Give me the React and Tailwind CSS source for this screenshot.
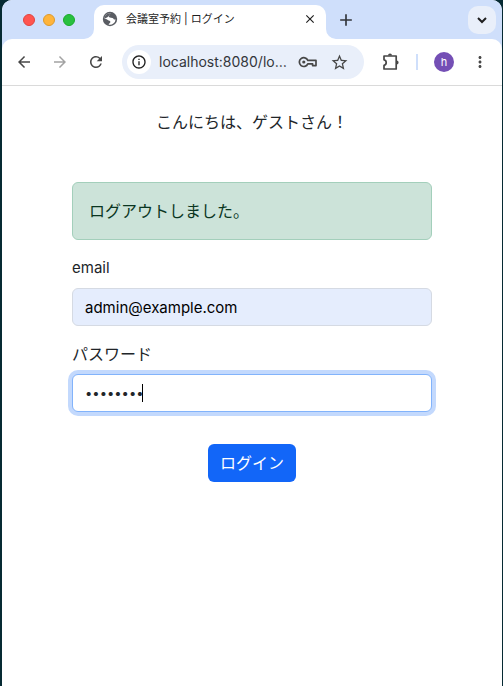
import {
  MdArrowBack,
  MdArrowForward,
  MdRefresh,
  MdOutlineInfo,
  MdStarBorder,
  MdMoreVert,
  MdClose,
  MdAdd,
} from "react-icons/md";

function TrafficLights() {
  return (
    <div className="flex gap-2 pl-[21px]">
      <button aria-label="Close window" className="size-3 rounded-full border border-[#e0443e] bg-[#ff5550]" />
      <button aria-label="Minimise window" className="size-3 rounded-full border border-[#dd9a2b] bg-[#ffb43b]" />
      <button aria-label="Zoom window" className="size-3 rounded-full border border-[#1aab29] bg-[#28c03f]" />
    </div>
  );
}

function TabCorner({ className }) {
  return (
    <svg viewBox="0 0 10 10" className={className} aria-hidden="true">
      <path d="M10 0V10H0A10 10 0 0 0 10 0Z" fill="#fff" />
    </svg>
  );
}

function GlobeIcon() {
  return (
    <svg viewBox="0 0 16 16" className="mt-[-6px] size-4" aria-hidden="true">
      <circle cx="8" cy="8" r="7.2" fill="#5a5d63" />
      <path
        d="M8.6 2.3C7.6 3.2 8.2 4 7.2 4.6C6.2 5.2 6.6 6.2 7.8 6.6C9.6 7 11.2 6.8 11.6 8C12 8.8 13 8.6 13.6 8.2A5.7 5.7 0 0 1 6.6 13.5C7 12.4 8.2 12.2 8.4 11C8.4 9.8 6.8 9.8 5.8 9C4.8 8 3.6 7.8 2.4 7.4A5.7 5.7 0 0 1 8.6 2.3Z"
        fill="#fff"
      />
      <path d="M2.4 7.4A5.7 5.7 0 0 1 8.6 2.3C7.6 3.2 8.2 4 7.2 4.6C6.2 5.2 6.4 5.8 5.4 6.2C4.4 6.6 3.6 7.2 2.4 7.4Z" fill="#5a5d63" />
    </svg>
  );
}

function TabStrip() {
  return (
    <div className="flex h-[39px] items-center rounded-t-[10px] bg-[#cfdffb] text-[#1f1f1f]">
      <TrafficLights />
      <div className="flex h-full items-end pl-[9px]">
        <TabCorner className="size-[10px]" />
        <div className="flex h-[34px] w-[232px] items-center rounded-t-[10px] bg-white px-2">
          <GlobeIcon />
          <span className="mt-[-6px] flex-1 truncate pl-2 text-[11px] leading-4">会議室予約 | ログイン</span>
          <button aria-label="Close tab" className="mt-[-6px]">
            <MdClose className="size-4 p-px" />
          </button>
        </div>
        <TabCorner className="size-[10px] -scale-x-100" />
      </div>
      <button aria-label="New tab">
        <MdAdd className="size-5 text-[#33363b]" />
      </button>
      <button
        aria-label="Search tabs"
        className="mr-[6px] ml-auto flex size-7 items-center justify-center rounded-[10px] bg-[#e9effa]"
      >
        <svg viewBox="0 0 16 16" className="size-4" fill="none" stroke="#1f1f1f" strokeWidth="2" aria-hidden="true">
          <path d="M4 6L8 10L12 6" />
        </svg>
      </button>
    </div>
  );
}

function PuzzleIcon() {
  return (
    <svg viewBox="0 0 18 18" className="size-[18px]" fill="none" stroke="#474747" strokeWidth="1.7" strokeLinejoin="round" aria-hidden="true">
      <path d="M2 3H14.2V16H2V12.4C3.4 12.2 4.2 11 4.2 9.6C4.2 8.2 3.4 7 2 6.8Z" />
      <path d="M6 2.6a2 2 0 0 1 4 0Z M14.6 7.4a2 2 0 0 1 0 4Z" fill="#474747" stroke="none" />
    </svg>
  );
}

function KeyIcon() {
  return (
    <svg viewBox="0 0 20 14" className="h-[14px] w-5" fill="none" stroke="#474747" strokeWidth="1.7" strokeLinejoin="round" aria-hidden="true">
      <path d="M9.8 5.4H18V10.6H14.6V8.8H9.8A4.4 4.4 0 1 1 9.8 5.4Z" />
      <circle cx="5.8" cy="7" r="1.6" fill="#474747" stroke="none" />
    </svg>
  );
}

function Toolbar() {
  return (
    <div className="bg-[#cfdffb]">
      <div className="flex h-[47px] items-center rounded-t-[10px] border-b border-[#dadada] bg-white px-[13px] text-[#474747]">
        <button aria-label="Back">
          <MdArrowBack className="size-[18px]" />
        </button>
        <button aria-label="Forward" className="ml-[18px]" disabled>
          <MdArrowForward className="size-[18px] text-[#a3a3a3]" />
        </button>
        <button aria-label="Reload" className="ml-[18px]">
          <MdRefresh className="size-[18px]" />
        </button>
        <div className="ml-[17px] flex h-[34px] min-w-0 flex-1 items-center rounded-full bg-[#e9effa] pr-[15px] pl-[5px]">
          <button aria-label="Site information" className="flex size-6 shrink-0 items-center justify-center rounded-full bg-white">
            <MdOutlineInfo className="size-4 text-[#1f1f1f]" />
          </button>
          <input
            aria-label="Address"
            readOnly
            tabIndex={-1}
            value="localhost:8080/login"
            className="ml-2 min-w-0 flex-1 truncate bg-transparent text-[14px] leading-5 text-[#33363b] outline-none"
          />
          <button aria-label="Passwords" className="ml-[10px]">
            <KeyIcon />
          </button>
          <button aria-label="Bookmark" className="ml-3">
            <MdStarBorder className="size-[19px]" />
          </button>
        </div>
        <button aria-label="Extensions" className="ml-[18px]">
          <PuzzleIcon />
        </button>
        <span className="ml-4 h-4 w-[2px] bg-[#cfdffb]" />
        <button aria-label="Profile" className="ml-4 size-5 rounded-full bg-[#744fb5] text-[11px] leading-5 text-white">
          h
        </button>
        <button aria-label="Menu" className="ml-[17px]">
          <MdMoreVert className="size-[18px]" />
        </button>
      </div>
    </div>
  );
}

function LoginPage() {
  return (
    <main className="flex-1 px-6 pt-6 text-[16px] leading-6 text-[#212529]">
      <p className="text-center">こんにちは、ゲストさん！</p>
      <div className="mx-auto mt-12 max-w-[360px]">
        <div role="alert" className="rounded-md border border-[#a3cfbb] bg-[#cce3d9] p-4 text-[#0a3622]">
          ログアウトしました。
        </div>
        <form className="mt-4" onSubmit={(e) => e.preventDefault()}>
          <label htmlFor="email" className="block text-[15px] leading-6">email</label>
          <input
            id="email"
            type="email"
            defaultValue="admin@example.com"
            className="mt-2 block h-[38px] w-full rounded-md border border-[#d5dae3] bg-[#e5edfd] px-3 text-[15px] text-black outline-none"
          />
          <label htmlFor="password" className="mt-4 block">パスワード</label>
          <div className="relative mt-2">
            <input
              id="password"
              type="password"
              defaultValue="password"
              className="block h-[38px] w-full rounded-md border border-[#82b3fb] bg-white px-3 text-[13px] caret-transparent ring-4 ring-[#c3d9fd] outline-none"
            />
            <span className="absolute top-[10px] left-[70px] h-[18px] w-px bg-black" />
          </div>
          <div className="mt-8 flex justify-center">
            <button type="submit" className="h-[38px] rounded-md bg-[#1266f8] px-3 text-white">
              ログイン
            </button>
          </div>
        </form>
      </div>
    </main>
  );
}

export default function App() {
  return (
    <div className="min-h-screen bg-[#062a33] pr-px pl-[2px] font-['Inter','Noto_Sans_CJK_JP',sans-serif]">
      <div className="flex min-h-screen flex-col rounded-t-[10px] bg-white">
        <TabStrip />
        <Toolbar />
        <LoginPage />
      </div>
    </div>
  );
}
